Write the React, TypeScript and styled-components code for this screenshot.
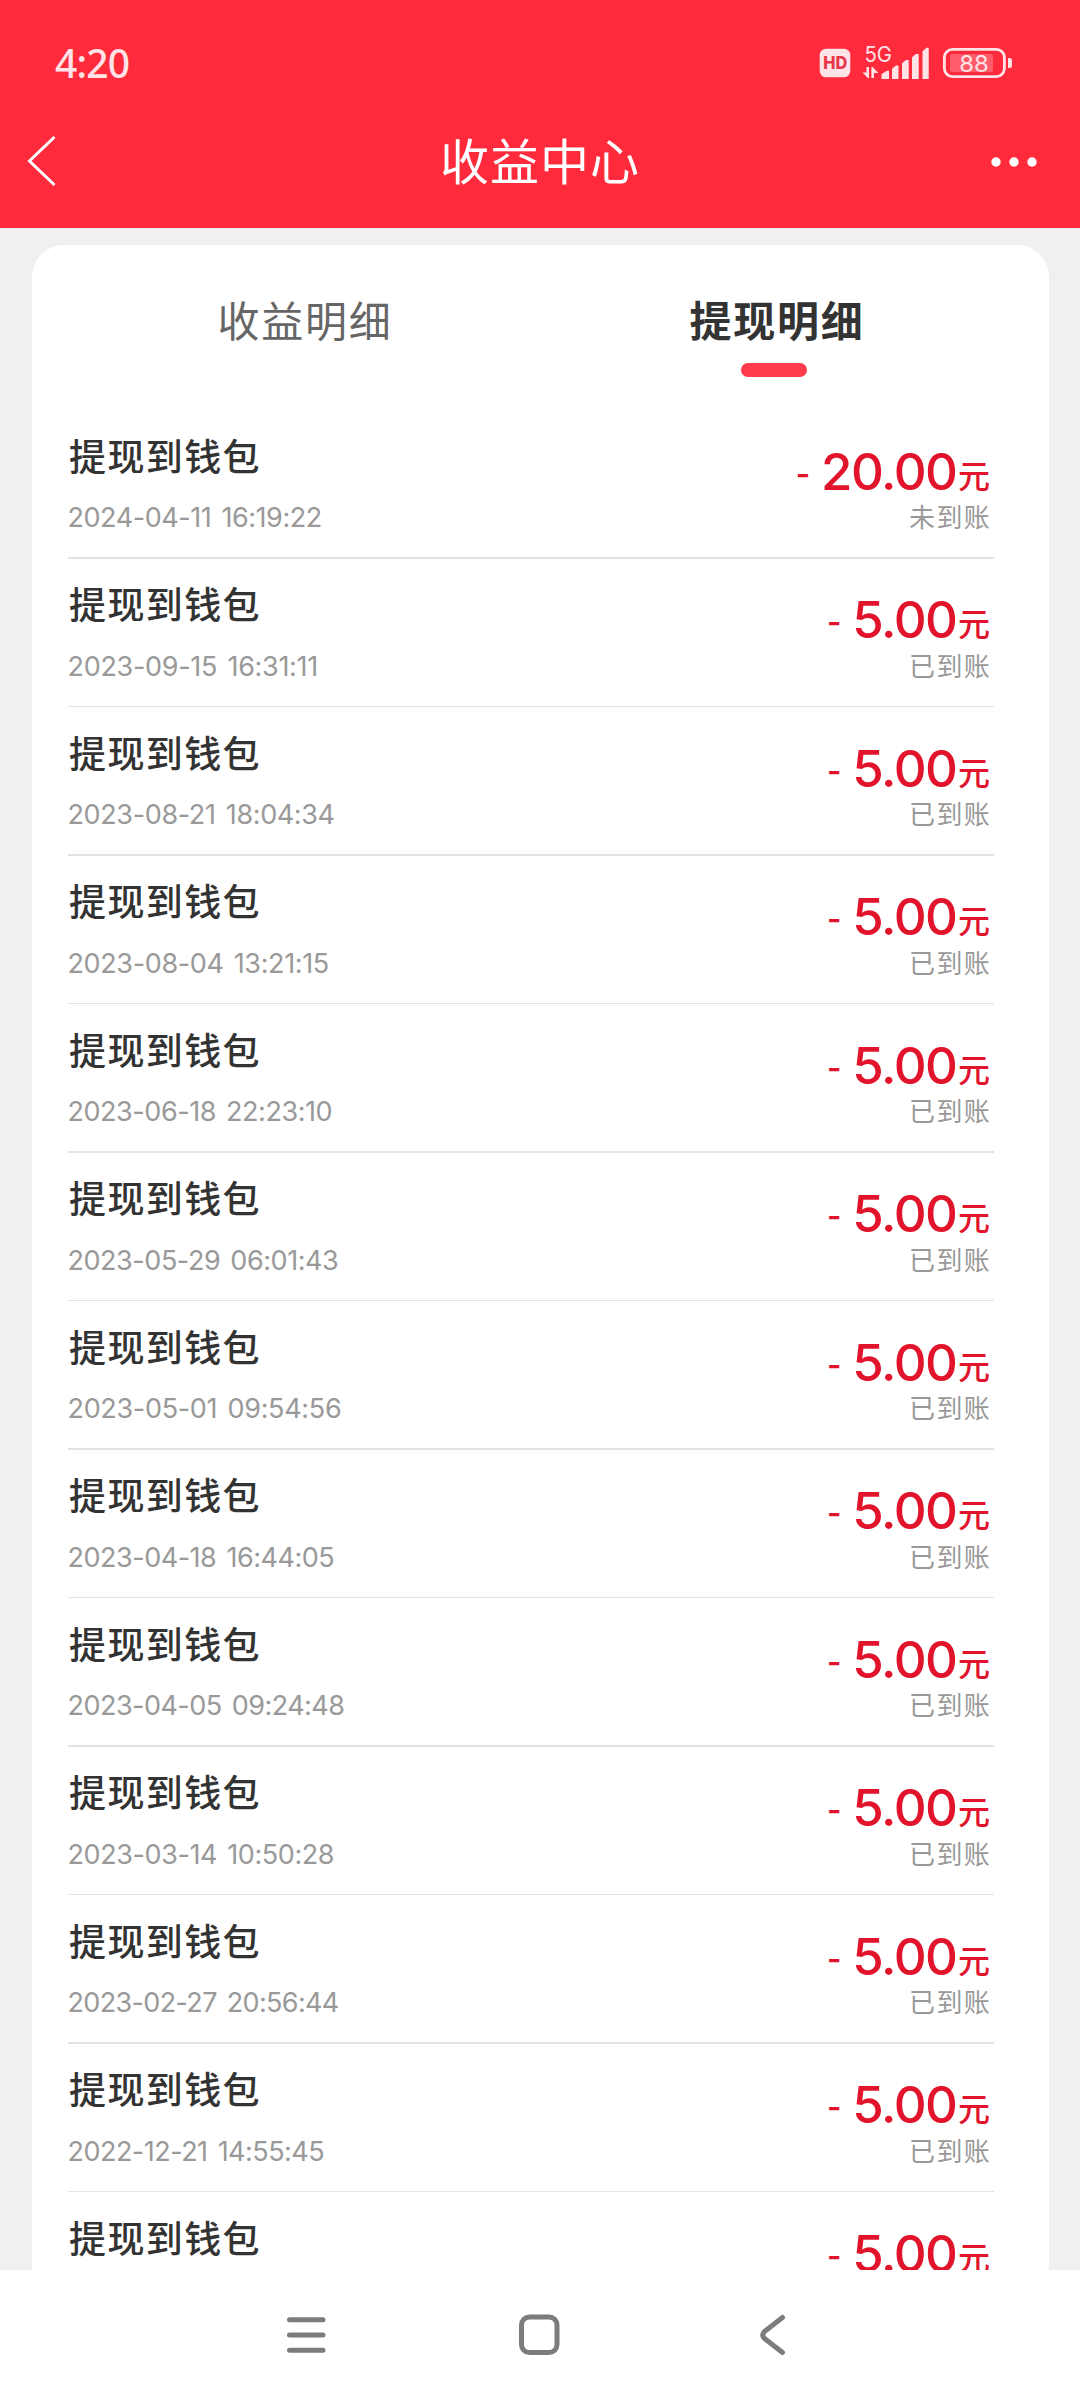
import React from "react";
import styled, { createGlobalStyle } from "styled-components";

const GlobalStyle = createGlobalStyle`
  * { box-sizing: border-box; }
  body { margin: 0; background: #fff; }
`;

const CJK = `"Noto Sans CJK SC", sans-serif`;
const LATIN = `Inter, "Noto Sans CJK SC", sans-serif`;

const Screen = styled.div`
  width: 1080px;
  height: 2400px;
  display: flex;
  flex-direction: column;
  overflow: hidden;
  background: #f1eff0;
  font-family: ${CJK};
`;

const Header = styled.header`
  height: 228px;
  flex: none;
  background: #ff2b3c;
  color: #fff;
`;

const StatusBar = styled.div`
  height: 126px;
  padding: 0 66px 0 55px;
  display: flex;
  align-items: center;
  justify-content: space-between;
`;

const Clock = styled.span`
  font: 500 39px/50px "Noto Sans", ${CJK};
  letter-spacing: -0.8px;
  color: #ffe3e6;
  padding-bottom: 1px;
`;

const StatusIcons = styled.svg`
  display: block;
  width: 196px;
  height: 40px;
  overflow: visible;
  font-family: ${LATIN};
`;

const TitleBar = styled.div`
  height: 72px;
  display: grid;
  grid-template-columns: 100px 1fr 100px;
  align-items: center;
`;

const Title = styled.h1`
  margin: 0;
  padding-bottom: 6px;
  text-align: center;
  font-size: 49px;
  line-height: 66px;
  font-weight: 400;
  letter-spacing: 1px;
`;

const BarIcon = styled.svg`
  display: block;
  width: 100px;
  height: 72px;
`;

const Card = styled.main`
  flex: 1;
  min-height: 0;
  margin: 17px 31px 0 32px;
  padding: 0 55px 0 36px;
  background: #fff;
  border-radius: 32px 32px 0 0;
  overflow: hidden;
`;

const Tabs = styled.nav`
  height: 165px;
  margin: 0 -19px 0 0;
  padding: 42px 0 0 1px;
  display: grid;
  grid-template-columns: 1fr 1fr;
`;

const Tab = styled.div<{ $active?: boolean }>`
  display: flex;
  flex-direction: column;
  align-items: center;
  font-size: 42px;
  line-height: 64px;
  letter-spacing: 1.7px;
  font-weight: ${(p) => (p.$active ? 700 : 400)};
  color: ${(p) => (p.$active ? "#333" : "#666")};
`;

const Indicator = styled.i`
  width: 66px;
  height: 14px;
  margin: 12px 6px 0 0;
  border-radius: 7px;
  background: #ff3b4b;
`;

const Record = styled.div`
  height: 148.5px;
  display: flex;
  flex-direction: column;
`;

const RecordBody = styled.div`
  flex: 1;
  display: flex;
  justify-content: space-between;
`;

const Divider = styled.div`
  flex: none;
  height: 1.5px;
  background: #e3e3e3;
`;

const Info = styled.div`
  padding-top: 16.5px;
`;

const Name = styled.div`
  font-size: 37px;
  line-height: 56px;
  font-weight: 500;
  letter-spacing: 1.4px;
  color: #333;
  padding-left: 1px;
`;

const Time = styled.div<{ $spacing: number }>`
  font: 400 27px/40px ${LATIN};
  letter-spacing: ${(p) => p.$spacing}px;
  word-spacing: 3px;
  color: #999;
  margin: 15.5px 0 0 -0.5px;
`;

const Result = styled.div`
  display: flex;
  flex-direction: column;
  align-items: flex-end;
  padding: 30.5px 4px 0 0;
`;

const Amount = styled.div`
  display: flex;
  align-items: flex-start;
  height: 62px;
  color: #e1142b;
`;

const Minus = styled.span`
  font: 600 31px/66px ${LATIN};
  margin-right: 11px;
`;

const Figure = styled.span`
  font: 550 51px/62px ${LATIN};
  letter-spacing: -1.5px;
`;

const Unit = styled.span`
  font: 500 32px/67px ${CJK};
  margin-left: 1.5px;
`;

const Status = styled.div`
  font-size: 26px;
  line-height: 36px;
  letter-spacing: 1.3px;
  margin: -4.5px -1px 0 0;
  color: #999;
`;

const NavBar = styled.footer`
  height: 130px;
  flex: none;
  display: flex;
  justify-content: center;
  align-items: flex-start;
  gap: 187px;
  padding: 42px 2px 0 0;
  background: #fff;
`;

const NavIcon = styled.svg`
  display: block;
  width: 46px;
  height: 46px;
  fill: none;
  stroke: #7c7c7c;
  stroke-width: 5;
  stroke-linecap: round;
  stroke-linejoin: round;
`;

type Entry = { time?: string; amount: string; status?: string; spacing?: number };

const entries: Entry[] = [
  { time: "2024-04-11 16:19:22", amount: "20.00", status: "未到账", spacing: -0.45 },
  { time: "2023-09-15 16:31:11", amount: "5.00", status: "已到账", spacing: -0.3 },
  { time: "2023-08-21 18:04:34", amount: "5.00", status: "已到账", spacing: -0.37 },
  { time: "2023-08-04 13:21:15", amount: "5.00", status: "已到账", spacing: -0.37 },
  { time: "2023-06-18 22:23:10", amount: "5.00", status: "已到账", spacing: -0.45 },
  { time: "2023-05-29 06:01:43", amount: "5.00", status: "已到账", spacing: -0.45 },
  { time: "2023-05-01 09:54:56", amount: "5.00", status: "已到账", spacing: -0.32 },
  { time: "2023-04-18 16:44:05", amount: "5.00", status: "已到账", spacing: -0.48 },
  { time: "2023-04-05 09:24:48", amount: "5.00", status: "已到账", spacing: -0.53 },
  { time: "2023-03-14 10:50:28", amount: "5.00", status: "已到账", spacing: -0.41 },
  { time: "2023-02-27 20:56:44", amount: "5.00", status: "已到账", spacing: -0.65 },
  { time: "2022-12-21 14:55:45", amount: "5.00", status: "已到账", spacing: -0.52 },
  { amount: "5.00" },
];

function StatusGlyphs() {
  return (
    <StatusIcons viewBox="818 43 196 40" fill="#ffe3e6">
      <rect x="819.7" y="48.7" width="30.6" height="28.6" rx="6.5" />
      <text x="835.300" y="69.400" textAnchor="middle" fontSize="17" fontWeight="800" fill="#e8364a" textLength="24" lengthAdjust="spacingAndGlyphs">HD</text>
      <text x="864.500" y="61.500" fontSize="21.500" textLength="27.500" lengthAdjust="spacingAndGlyphs">5G</text>
      <path d="M866.500 67h2.500v11h-1.200l-5.300-5.500h4zM871.400 78v-11h1.200l5.700 6h-4.300v5z" />
      <path d="M881.500 79v-4q0-1 1-1.600l4.500-2.600h2v8.200zM892 79v-9.500q0-1 .8-1.600l3.200-2.400h2.500v13.500zM902 79v-15q0-1 .8-1.600l3.200-2.400h2.700v19zM912 79v-20.800q0-1 .8-1.600l3.200-2.600h2.700v25zM922.500 79v-27q0-1 .8-1.600l3.200-2.600h2.200v31.200z" />
      <rect x="944.400" y="49.400" width="60" height="27.200" rx="8" fill="none" stroke="#ffe3e6" strokeWidth="2.800" />
      <rect x="950" y="54" width="43" height="18" rx="2" fill="#ff5c6b" />
      <path d="M1008 58h1.500q2.500 0 2.500 2.500v5q0 2.500-2.500 2.500h-1.500z" />
      <text x="974" y="71.800" textAnchor="middle" fontSize="23.500" textLength="29.500" lengthAdjust="spacingAndGlyphs">88</text>
    </StatusIcons>
  );
}

export default function App() {
  return (
    <Screen>
      <GlobalStyle />
      <Header>
        <StatusBar>
          <Clock>4:20</Clock>
          <StatusGlyphs />
        </StatusBar>
        <TitleBar>
          <BarIcon viewBox="0 126 100 72" fill="none" stroke="#fff" strokeWidth="3">
            <path d="M54.500 137L29.500 161L54.500 185" />
          </BarIcon>
          <Title>收益中心</Title>
          <BarIcon viewBox="980 126 100 72" fill="#fff">
            <circle cx="996" cy="162" r="4.700" />
            <circle cx="1014" cy="162" r="4.700" />
            <circle cx="1032" cy="162" r="4.700" />
          </BarIcon>
        </TitleBar>
      </Header>
      <Card>
        <Tabs>
          <Tab>收益明细</Tab>
          <Tab $active>
            提现明细
            <Indicator />
          </Tab>
        </Tabs>
        {entries.map((e, i) => (
          <Record key={i}>
            <RecordBody>
              <Info>
                <Name>提现到钱包</Name>
                {e.time && <Time $spacing={e.spacing ?? 0}>{e.time}</Time>}
              </Info>
              <Result>
                <Amount>
                  <Minus>-</Minus>
                  <Figure>{e.amount}</Figure>
                  <Unit>元</Unit>
                </Amount>
                {e.status && <Status>{e.status}</Status>}
              </Result>
            </RecordBody>
            <Divider />
          </Record>
        ))}
      </Card>
      <NavBar>
        <NavIcon viewBox="283 2312 46 46">
          <path d="M289.500 2319.700H323M289.500 2335H323M289.500 2350.300H323" />
        </NavIcon>
        <NavIcon viewBox="516 2312 46 46">
          <rect x="521.500" y="2317" width="35.500" height="35.500" rx="8" />
        </NavIcon>
        <NavIcon viewBox="749 2312 46 46">
          <path d="M782.500 2317.500L764.500 2331.500Q761 2335 764.500 2338.500L782.500 2352.500" />
        </NavIcon>
      </NavBar>
    </Screen>
  );
}
